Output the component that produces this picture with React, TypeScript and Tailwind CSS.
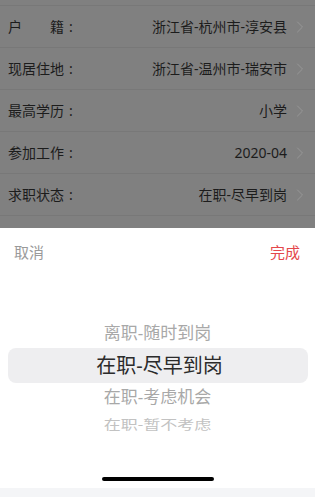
import { ChevronRight } from "lucide-react";

const rows = [
  { label: "户\u3000\u3000籍", value: "浙江省-杭州市-淳安县" },
  { label: "现居住地", value: "浙江省-温州市-瑞安市" },
  { label: "最高学历", value: "小学" },
  { label: "参加工作", value: "2020-04" },
  { label: "求职状态", value: "在职-尽早到岗" },
];

export default function App() {
  return (
    <div
      className="flex h-[497px] w-[315px] flex-col overflow-hidden bg-white"
      style={{ fontFamily: '"Noto Sans", "Noto Sans CJK SC", sans-serif' }}
    >
      {/* dimmed form behind the sheet */}
      <div className="flex h-[228px] flex-col bg-[#808080] pt-[5px]">
        <div className="border-t border-[#787878]" />
        {rows.map((r) => (
          <div
            key={r.label}
            className="flex h-[42px] items-center border-b border-[#787878] pl-2 pr-[5px] text-[14px] text-[#1c1c1c]"
          >
            <span className="whitespace-pre">{r.label}</span>
            <span className="ml-[5px]">:</span>
            <span className="ml-auto">{r.value}</span>
            <ChevronRight className="ml-[3px] text-[#9a9a9a]" size={20} strokeWidth={1} />
          </div>
        ))}
      </div>

      {/* picker sheet */}
      <div className="flex flex-1 flex-col bg-white">
        <div className="flex h-12 items-center justify-between pl-[14px] pr-[15px] text-[15px]">
          <span className="text-[#9a9a9a]">取消</span>
          <span className="text-[#e4474b]">完成</span>
        </div>
        <div className="flex flex-col items-center pt-[42px]">
          <div className="flex h-[30px] items-center text-[17px] text-[#a8a8a8]">离职-随时到岗</div>
          <div className="flex h-[35px] w-[300px] items-center justify-center rounded-[8px] bg-[#eeeef0] pl-[4px] text-[20px] text-[#2b2b2b]">
            在职-尽早到岗
          </div>
          <div className="flex h-[28px] items-center text-[17px] text-[#a8a8a8]">在职-考虑机会</div>
          <div className="flex h-[26px] scale-y-[0.75] items-center text-[17px] text-[#c2c2c2]">在职-暂不考虑</div>
        </div>
        <div className="mt-auto flex h-[11px] justify-center">
          <div className="h-[4px] w-[112px] rounded-full bg-black" />
        </div>
      </div>
      <div className="h-[9px] bg-[#f4f5f7]" />
    </div>
  );
}
